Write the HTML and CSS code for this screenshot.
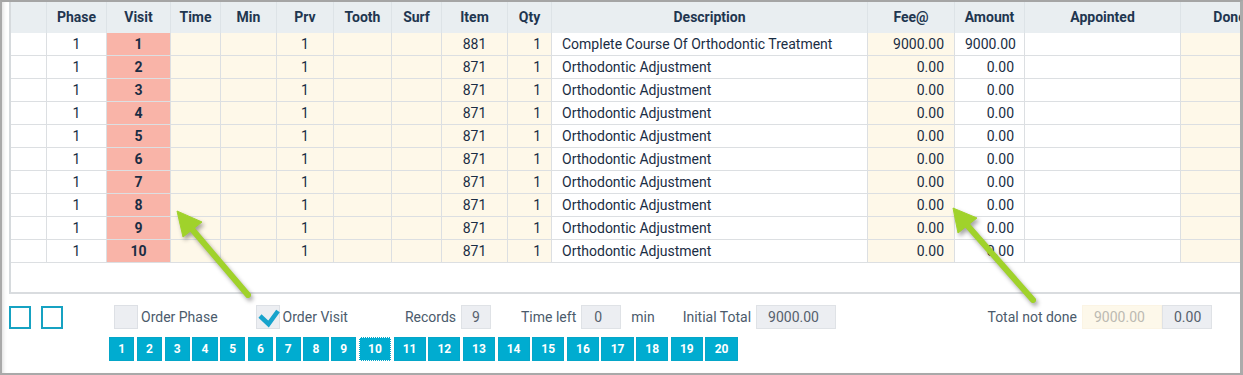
FILE: index.html
```html
<!DOCTYPE html>
<html lang="en">
<head>
  <meta charset="utf-8">
  <title>Treatment plan</title>
  <link rel="stylesheet" href="styles.css">
</head>
<body>
<div class="window">

  <div class="grid">
    <div class="grid-row grid-head">
      <div></div><div>Phase</div><div>Visit</div><div>Time</div><div>Min</div><div>Prv</div><div>Tooth</div><div>Surf</div><div>Item</div><div>Qty</div><div>Description</div><div>Fee@</div><div>Amount</div><div>Appointed</div><div>Done</div>
    </div>
    <div class="grid-row">
      <div></div><div class="c">1</div><div class="visit">1</div><div class="cr"></div><div class="cr"></div><div class="cr c">1</div><div class="cr"></div><div class="cr"></div><div class="cr c">881</div><div class="cr r">1</div><div>Complete Course Of Orthodontic Treatment</div><div class="cr r">9000.00</div><div class="r">9000.00</div><div></div><div class="cr"></div>
    </div>
    <div class="grid-row">
      <div></div><div class="c">1</div><div class="visit">2</div><div class="cr"></div><div class="cr"></div><div class="cr c">1</div><div class="cr"></div><div class="cr"></div><div class="cr c">871</div><div class="cr r">1</div><div>Orthodontic Adjustment</div><div class="cr r">0.00</div><div class="r">0.00</div><div></div><div class="cr"></div>
    </div>
    <div class="grid-row">
      <div></div><div class="c">1</div><div class="visit">3</div><div class="cr"></div><div class="cr"></div><div class="cr c">1</div><div class="cr"></div><div class="cr"></div><div class="cr c">871</div><div class="cr r">1</div><div>Orthodontic Adjustment</div><div class="cr r">0.00</div><div class="r">0.00</div><div></div><div class="cr"></div>
    </div>
    <div class="grid-row">
      <div></div><div class="c">1</div><div class="visit">4</div><div class="cr"></div><div class="cr"></div><div class="cr c">1</div><div class="cr"></div><div class="cr"></div><div class="cr c">871</div><div class="cr r">1</div><div>Orthodontic Adjustment</div><div class="cr r">0.00</div><div class="r">0.00</div><div></div><div class="cr"></div>
    </div>
    <div class="grid-row">
      <div></div><div class="c">1</div><div class="visit">5</div><div class="cr"></div><div class="cr"></div><div class="cr c">1</div><div class="cr"></div><div class="cr"></div><div class="cr c">871</div><div class="cr r">1</div><div>Orthodontic Adjustment</div><div class="cr r">0.00</div><div class="r">0.00</div><div></div><div class="cr"></div>
    </div>
    <div class="grid-row">
      <div></div><div class="c">1</div><div class="visit">6</div><div class="cr"></div><div class="cr"></div><div class="cr c">1</div><div class="cr"></div><div class="cr"></div><div class="cr c">871</div><div class="cr r">1</div><div>Orthodontic Adjustment</div><div class="cr r">0.00</div><div class="r">0.00</div><div></div><div class="cr"></div>
    </div>
    <div class="grid-row">
      <div></div><div class="c">1</div><div class="visit">7</div><div class="cr"></div><div class="cr"></div><div class="cr c">1</div><div class="cr"></div><div class="cr"></div><div class="cr c">871</div><div class="cr r">1</div><div>Orthodontic Adjustment</div><div class="cr r">0.00</div><div class="r">0.00</div><div></div><div class="cr"></div>
    </div>
    <div class="grid-row">
      <div></div><div class="c">1</div><div class="visit">8</div><div class="cr"></div><div class="cr"></div><div class="cr c">1</div><div class="cr"></div><div class="cr"></div><div class="cr c">871</div><div class="cr r">1</div><div>Orthodontic Adjustment</div><div class="cr r">0.00</div><div class="r">0.00</div><div></div><div class="cr"></div>
    </div>
    <div class="grid-row">
      <div></div><div class="c">1</div><div class="visit">9</div><div class="cr"></div><div class="cr"></div><div class="cr c">1</div><div class="cr"></div><div class="cr"></div><div class="cr c">871</div><div class="cr r">1</div><div>Orthodontic Adjustment</div><div class="cr r">0.00</div><div class="r">0.00</div><div></div><div class="cr"></div>
    </div>
    <div class="grid-row">
      <div></div><div class="c">1</div><div class="visit">10</div><div class="cr"></div><div class="cr"></div><div class="cr c">1</div><div class="cr"></div><div class="cr"></div><div class="cr c">871</div><div class="cr r">1</div><div>Orthodontic Adjustment</div><div class="cr r">0.00</div><div class="r">0.00</div><div></div><div class="cr"></div>
    </div>
  </div>

  <div class="tools">
    <span class="sq"></span>
    <span class="sq sq-2"></span>

    <span class="chk chk-phase"></span>
    <span class="lbl lbl-chk">Order Phase</span>

    <span class="chk chk-visit">
      <svg width="24" height="24" viewBox="0 0 24 24"><polyline points="4,11 12.5,19 22,6" fill="none" stroke="#17a3cc" stroke-width="4.5"/></svg>
    </span>
    <span class="lbl lbl-chk">Order Visit</span>

    <span class="lbl lbl-records">Records</span>
    <span class="field field-records">9</span>

    <span class="lbl lbl-time">Time left</span>
    <span class="field field-time">0</span>
    <span class="lbl lbl-min">min</span>

    <span class="lbl lbl-initial">Initial Total</span>
    <span class="field field-initial">9000.00</span>

    <span class="not-done">
      <span class="lbl">Total not done</span>
      <span class="field field-cream">9000.00</span>
      <span class="field field-zero">0.00</span>
    </span>
  </div>

  <div class="pager">
    <button>1</button>
    <button>2</button>
    <button>3</button>
    <button>4</button>
    <button>5</button>
    <button>6</button>
    <button>7</button>
    <button>8</button>
    <button>9</button>
    <button class="current">10</button>
    <button>11</button>
    <button>12</button>
    <button>13</button>
    <button>14</button>
    <button>15</button>
    <button>16</button>
    <button>17</button>
    <button>18</button>
    <button>19</button>
    <button>20</button>
  </div>

  <!-- annotation arrows drawn over the screenshot -->
  <svg class="arrows" width="1243" height="375" viewBox="0 0 1243 375">
    <g class="arrow">
      <line x1="191" y1="228" x2="248" y2="295"/>
      <polygon points="177,211 202,222 183,237"/>
    </g>
    <g class="arrow">
      <line x1="967" y1="225" x2="1033" y2="300"/>
      <polygon points="953,208 977,218 958,233"/>
    </g>
  </svg>
</div>
</body>
</html>
```

FILE: styles.css
```css
* {
  box-sizing: border-box;
}
body {
  margin: 0;
  font-family: Roboto, "Liberation Sans", sans-serif;
  font-size: 14px;
  color: #1a2d44;
  background: #fff;
}
.window {
  position: relative;
  width: 1243px;
  height: 375px;
  padding-left: 7px;
  border-top: 2px solid #a5a5a5;
  border-left: 2px solid #a9a9a9;
  border-right: 3px solid #ababab;
  border-bottom: 2px solid #a9a9a9;
  box-shadow: inset 4px 0 4px -3px rgba(0, 0, 0, 0.15);
  overflow: hidden;
}

/* grid */
.grid {
  height: 292px;
  border-left: 2px solid #d6dadd;
  border-bottom: 2px solid #d9dcdf;
  overflow: hidden;
}
.grid-row {
  display: grid;
  grid-template-columns: 36px 60px 64px 50px 56px 57px 58px 50px 66px 44px 316px 87px 70px 156px 98px;
}
.grid-row > div {
  height: 23px;
  line-height: 22px;
  padding: 0 10px;
  border-right: 1px solid #dcdfe2;
  border-bottom: 1px solid #dcdfe2;
  white-space: nowrap;
  overflow: hidden;
}
.grid-head > div {
  height: 31px;
  line-height: 31px;
  padding: 0;
  background: #e9eef1;
  border-right: 1px solid #dde3e7;
  border-bottom: none;
  font-weight: bold;
  color: #1f3650;
  text-align: center;
}
.grid-row .c {
  text-align: center;
}
.grid-row .r {
  text-align: right;
}
.grid-row .cr {
  background: #fef8e9;
}
.grid-row .visit {
  background: #f9b4a8;
  font-weight: bold;
  text-align: center;
}

/* bottom controls */
.tools {
  display: flex;
  align-items: center;
  height: 24px;
  margin-top: 11px;
  color: #4b5b6c;
}
.sq {
  width: 22px;
  height: 23px;
  border: 2px solid #16a2c2;
}
.sq-2 {
  margin-left: 10px;
}
.chk {
  width: 24px;
  height: 24px;
  background: #eceef2;
  border: 1px solid #dde0e5;
}
.chk svg {
  display: block;
  margin: -1px;
}
.chk-phase {
  margin-left: 51px;
}
.chk-visit {
  margin-left: 38px;
}
.lbl-chk {
  margin-left: 3px;
}
.lbl-records {
  margin-left: 57px;
}
.lbl-time {
  margin-left: 30px;
}
.lbl-min {
  margin-left: 10px;
}
.lbl-initial {
  margin-left: 28px;
}
.field {
  height: 24px;
  line-height: 22px;
  padding: 0 11px;
  margin-left: 5px;
  background: #eceef2;
  border: 1px solid #dfe2e6;
  color: #56616d;
}
.field-records {
  width: 30px;
  padding: 0;
  text-align: center;
}
.field-time {
  width: 40px;
  padding-left: 12px;
}
.field-initial {
  width: 80px;
}
.not-done {
  display: flex;
  align-items: center;
  margin-left: auto;
  margin-right: 28px;
}
.field-cream {
  width: 80px;
  background: #fdf8ea;
  border-color: #fbf4e4;
  color: #bcbab2;
}
.field-zero {
  width: 50px;
  margin-left: 0;
}

/* pager */
.pager {
  display: flex;
  gap: 2.5px;
  margin-top: 8px;
  margin-left: 100px;
}
.pager button {
  height: 24px;
  padding: 0 8.2px;
  border: 1px solid #05a6c8;
  background: #00acd0;
  color: #fff;
  font-family: Roboto, "Liberation Sans", sans-serif;
  font-size: 12px;
  font-weight: bold;
}
.pager button.current {
  outline: 1px dotted #fff;
  outline-offset: -1px;
}

/* arrows */
.arrows {
  position: absolute;
  top: -2px;
  left: -2px;
  pointer-events: none;
}
.arrow {
  fill: #a0d22b;
  stroke: #a0d22b;
  filter: drop-shadow(2px 3px 2px rgba(0, 0, 0, 0.35));
}
.arrow line {
  stroke-width: 6;
  stroke-linecap: round;
}
.arrow polygon {
  stroke-width: 1;
  stroke-linejoin: round;
}
```
